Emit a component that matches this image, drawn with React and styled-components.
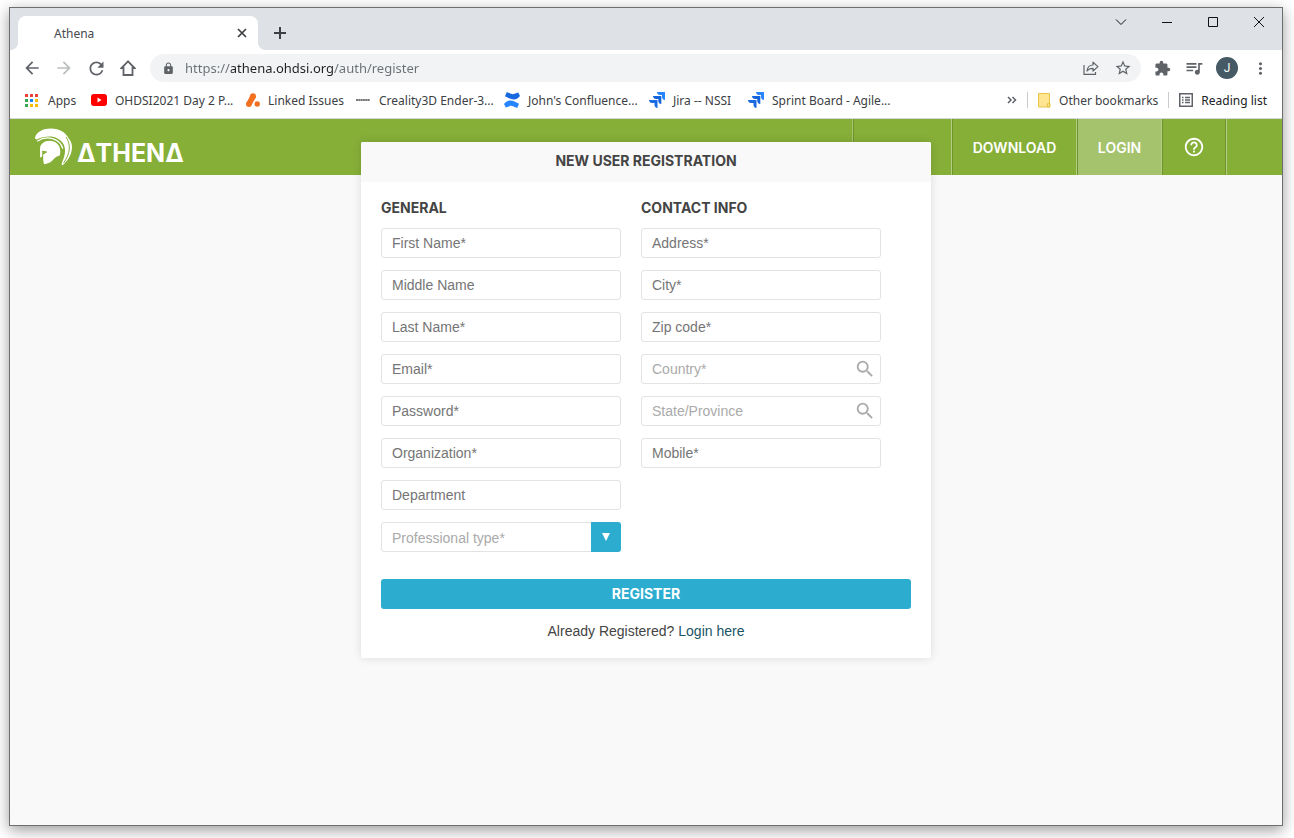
import React from "react";
import styled, { createGlobalStyle } from "styled-components";
import {
  MdArrowBack,
  MdArrowForward,
  MdRefresh,
  MdOutlineHome,
  MdLock,
  MdStarBorder,
  MdExtension,
  MdQueueMusic,
  MdMoreVert,
  MdSearch,
  MdHelpOutline,
} from "react-icons/md";

const chromeFont = `"Noto Sans", "Open Sans", sans-serif`;
const headingFont = `Inter, "Liberation Sans", sans-serif`;
const bodyFont = `"Liberation Sans", Arial, sans-serif`;

const GlobalStyle = createGlobalStyle`
  *, *::before, *::after { box-sizing: border-box; }
  body { margin: 0; background: #fff; font-family: ${bodyFont}; font-size: 14px; color: #444; }
  button, input, select { font: inherit; margin: 0; }
  a { text-decoration: none; color: inherit; }
  svg { display: block; flex: none; }
`;

const Desktop = styled.div`
  min-height: 100vh;
  padding: 7px 11px 12px 9px;
  display: flex;
  overflow: hidden;
`;

const Window = styled.div`
  flex: 1;
  min-width: 0;
  display: flex;
  flex-direction: column;
  border: 1px solid #6e6e6e;
  background: #f9f9f9;
  box-shadow: 0 4px 14px rgba(0, 0, 0, 0.4);
`;

/* Browser chrome */

const TabStrip = styled.div`
  height: 42px;
  padding: 8px 0 0 8px;
  display: flex;
  background: #dee1e6;
  font-family: ${chromeFont};
`;

const Tab = styled.div`
  position: relative;
  width: 240px;
  height: 34px;
  padding: 0 8px 0 36px;
  display: flex;
  align-items: center;
  justify-content: space-between;
  border-radius: 8px 8px 0 0;
  background: #fff;
  color: #45494d;
  font-size: 12px;

  &::before,
  &::after {
    content: "";
    position: absolute;
    bottom: 0;
    width: 8px;
    height: 8px;
  }
  &::before {
    left: -8px;
    background: radial-gradient(circle at 0 0, #dee1e6 8px, #fff 8px);
  }
  &::after {
    right: -8px;
    background: radial-gradient(circle at 100% 0, #dee1e6 8px, #fff 8px);
  }
`;

const IconButton = styled.button`
  width: ${(p) => p.$size || 20}px;
  height: ${(p) => p.$size || 20}px;
  padding: 0;
  display: flex;
  flex: none;
  align-items: center;
  justify-content: center;
  border: 0;
  background: none;
  color: ${(p) => p.$color || "#5f6368"};
`;

const NewTab = styled(IconButton)`
  margin: 7px 0 0 12px;
`;

const WindowControls = styled.div`
  margin-left: auto;
  padding-right: 17px;
  display: flex;
  gap: 34px;
`;

const Toolbar = styled.div`
  height: 36px;
  padding: 0 12px;
  display: flex;
  align-items: center;
  background: #fff;
  font-family: ${chromeFont};
`;

const NavButtons = styled.div`
  display: flex;
  gap: 12px;
  margin-right: 12px;
`;

const Omnibox = styled.div`
  flex: 1;
  min-width: 0;
  height: 28px;
  padding: 0 8px 0 12px;
  display: flex;
  align-items: center;
  gap: 12px;
  border-radius: 14px;
  background: #f1f3f4;

  & > svg {
    margin-right: -2px;
  }
`;

const Address = styled.input`
  flex: 1;
  min-width: 0;
  height: 24px;
  padding: 0;
  border: 0;
  outline: 0;
  font-size: 13px;
  color: #202124;
  background: linear-gradient(90deg, #6b6f74 46px, #202124 46px, #202124 148px, #6b6f74 148px);
  background-clip: text;
  -webkit-background-clip: text;
  -webkit-text-fill-color: transparent;
`;

const ToolbarActions = styled.div`
  display: flex;
  align-items: center;
  gap: 12px;
  margin-left: 11px;
`;

const Avatar = styled.button`
  width: 22px;
  height: 22px;
  padding: 0;
  border: 0;
  border-radius: 50%;
  background: #455a64;
  color: #fff;
  font-family: Roboto, sans-serif;
  font-size: 12px;
`;

const Bookmarks = styled.nav`
  height: 33px;
  padding: 0 15px;
  display: flex;
  align-items: center;
  border-bottom: 1px solid #d5d7da;
  background: #fff;
  font-family: ${chromeFont};
  font-size: 12px;
  color: #3c4043;
  white-space: nowrap;
  overflow: hidden;
`;

const Bookmark = styled.a`
  width: ${(p) => p.$width}px;
  flex: none;
  display: flex;
  align-items: center;
  gap: ${(p) => p.$gap || 8}px;
  padding-bottom: 4px;
`;

const BookmarkEnd = styled.div`
  margin-left: auto;
  padding-bottom: 4px;
  display: flex;
  align-items: center;
  gap: 10px;
`;

const EndLink = styled.a`
  display: flex;
  align-items: center;
  gap: 8px;
  color: ${(p) => p.$color || "inherit"};
`;

const Separator = styled.span`
  width: 1px;
  height: 16px;
  background: #c8cbcf;
`;

/* Athena site */

const Site = styled.div`
  position: relative;
  flex: 1;
`;

const SiteHeader = styled.header`
  height: 56px;
  padding: 0 55px 0 25px;
  display: flex;
  justify-content: space-between;
  background: #86af38;
`;

const Brand = styled.a`
  display: flex;
  align-items: center;
  gap: 4px;
  color: #fff;
`;

const Wordmark = styled.span`
  padding-top: 12px;
  font-family: Inter, "Open Sans", sans-serif;
  font-size: 25px;
  line-height: 32px;
  font-weight: 700;
`;

const SiteNav = styled.nav`
  display: flex;
  border-left: 1px solid #a6c470;
  border-right: 1px solid #b4cd85;
`;

const NavItem = styled.a`
  width: ${(p) => p.$width}px;
  display: flex;
  align-items: center;
  justify-content: center;
  border-left: 1px solid #6f942c;
  border-right: 1px solid #b4cd85;
  background: ${(p) => (p.$active ? "#a5c36c" : "transparent")};
  color: #fff;
  font-family: ${headingFont};
  font-size: 14px;
  font-weight: 600;

  &:last-child {
    border-right-color: #6f942c;
  }
`;

const Dialog = styled.form`
  position: absolute;
  top: 23px;
  left: 0;
  right: 0;
  width: 570px;
  max-width: 100%;
  margin: 0 auto;
  border-radius: 2px;
  background: #fff;
  box-shadow: 0 0 10px rgba(0, 0, 0, 0.12);
`;

const DialogTitle = styled.h1`
  margin: 0;
  padding: 9px 20px 11px;
  background: #f9f9f9;
  border-radius: 2px 2px 0 0;
  text-align: center;
  font-family: ${headingFont};
  font-size: 14px;
  line-height: 20px;
  font-weight: 700;
`;

const DialogBody = styled.div`
  padding: 16px 20px;
`;

const Columns = styled.div`
  display: grid;
  grid-template-columns: 240px 240px;
  column-gap: 20px;
  align-items: start;
`;

const FieldGroup = styled.fieldset`
  min-width: 0;
  margin: 0;
  padding: 0;
  border: 0;
  display: grid;
  row-gap: 12px;
`;

const GroupTitle = styled.legend`
  padding: 0 0 10px;
  font-family: ${headingFont};
  font-size: 14px;
  line-height: 20px;
  font-weight: 700;
`;

const Field = styled.div`
  position: relative;
`;

const TextInput = styled.input`
  display: block;
  width: 100%;
  height: 30px;
  padding: 0 10px;
  border: 1px solid #e3e3e3;
  border-radius: 3px;
  outline: 0;
  background: #fff;
  color: #444;

  &::placeholder {
    color: ${(p) => (p.$muted ? "#aaa" : "#757575")};
    opacity: 1;
  }
`;

const SearchMark = styled(MdSearch)`
  position: absolute;
  top: 4px;
  right: 5px;
  color: #aaa;
  pointer-events: none;
`;

const Select = styled.select`
  display: block;
  width: 100%;
  height: 30px;
  padding: 1px 40px 0 10px;
  appearance: none;
  border: 1px solid #e3e3e3;
  border-radius: 3px;
  outline: 0;
  background: #fff;
  color: #aaa;
`;

const SelectArrow = styled.span`
  position: absolute;
  top: 0;
  right: 0;
  width: 30px;
  height: 30px;
  display: flex;
  align-items: center;
  justify-content: center;
  border-radius: 0 3px 3px 0;
  background: #2cadd0;
  pointer-events: none;
`;

const Register = styled.button`
  display: block;
  width: 100%;
  height: 30px;
  margin-top: 27px;
  padding: 0 0 2px;
  border: 0;
  border-radius: 3px;
  background: #2cadd0;
  color: #fff;
  font-family: ${headingFont};
  font-weight: 700;
`;

const LoginLine = styled.p`
  margin: 12px 0 0;
  text-align: center;
  line-height: 21px;
`;

const LoginLink = styled.a`
  color: #1a5565;
`;

/* Drawings */

const HelmetIcon = () => (
  <svg width="38" height="38" viewBox="0 0 38 38" fill="#fff" aria-hidden="true">
    <path d="M0 9.500C1.500 4 8 .6 16 .6c8.500 0 14.600 4 17.500 9.600C35.600 12.500 37 15.500 37 19c0 7-4 14-9.500 18.300-.8-.4-1-1.500-.6-2.600C30.500 27 31 21 28.500 16 25.500 11 20 8.500 14.500 8.500 9.500 8.500 5 9.500 1.800 11.500.6 11.200 0 10.500 0 9.500z" />
    <path d="M2.200 13.200C7 10 12.500 9.300 17.500 10.600c5.500 1.600 9 5.400 10.300 10" fill="none" stroke="#fff" strokeWidth="1.300" />
    <path d="M31 9c5 7 4.500 17-2.500 26" fill="none" stroke="#86af38" strokeWidth="1" />
    <path d="M5 20.500C5.300 16 9.300 12.800 14.500 12.800c6 0 10.500 4 10.700 9.700 0 2 0 3.500-.4 5-2 .7-4.500 1.500-6 3.500-1.800 2.500-5.300 4.800-9.800 5.300-.8-3.500-1-7-.7-9.800L12 24.300l-.4-1-4.600-.5c.4 2.200.4 4.200 0 6L5 29.500c.3-3 0-6 0-9z" />
  </svg>
);

const JiraIcon = () => (
  <svg width="16" height="16" viewBox="0 0 16 16" aria-hidden="true">
    <path d="M0 8h8.500v8c-2 0-3-1.500-3-3v-2H3C1 11 0 9.500 0 8z" fill="#1a6ae4" />
    <path d="M4 4h8.300v8c-2 0-3-1.500-3-3V7H7C5 7 4 5.500 4 4z" fill="#1463dc" />
    <path d="M8 0h8v8c-2 0-3-1.500-3-3V3h-2C9 3 8 1.500 8 0z" fill="#2684ff" />
  </svg>
);

const ConfluenceIcon = () => (
  <svg width="16" height="16" viewBox="0 0 16 16" aria-hidden="true">
    <path d="M0 12l1.800 3.600 3.700-1.400c1.500-.7 2.500-.4 4 .2l3.700 1.500 1.800-4.200-4-2C7 7.800 3 8 0 12z" fill="#2684ff" />
    <path d="M16 4 14.200.4l-3.700 1.400c-1.500.7-2.500.4-4-.2L2.800.1 1 4.300l4 2C9 8.200 13 8 16 4z" fill="#1868e0" />
  </svg>
);

const appColors = ["#ea4335", "#ea4335", "#ea4335", "#34a853", "#1a84f0", "#fbbc04", "#34a853", "#fbbc04", "#fbbc04"];

const AppsIcon = () => (
  <svg width="13" height="13" viewBox="0 0 13 13" aria-hidden="true">
    {appColors.map((c, i) => (
      <rect key={i} x={(i % 3) * 5} y={Math.floor(i / 3) * 5} width="3" height="3" fill={c} />
    ))}
  </svg>
);

const YoutubeIcon = () => (
  <svg width="16" height="12" viewBox="0 0 16 12" aria-hidden="true">
    <rect width="16" height="12" rx="3" fill="#f00" />
    <path d="M6.500 3.500v5L10.500 6z" fill="#fff" />
  </svg>
);

const IssuesIcon = () => (
  <svg width="14" height="14" viewBox="0 0 14 14" fill="#f37021" aria-hidden="true">
    <circle cx="7" cy="3.200" r="3" />
    <path d="M4.200 2.500.8 9.500 5.400 12.200 10 4z" />
    <circle cx="2.900" cy="11" r="2.900" />
    <circle cx="11.200" cy="11" r="2.700" />
  </svg>
);

const CrealityIcon = () => (
  <svg width="16" height="4" viewBox="0 0 16 4" aria-hidden="true">
    <path d="M1 2h14" stroke="#777" strokeWidth="2" strokeDasharray="2 .3" />
  </svg>
);

const stroke = { fill: "none", stroke: "currentColor", "aria-hidden": true };

const ShareIcon = () => (
  <svg width="16" height="16" viewBox="0 0 16 16" {...stroke} strokeWidth="1.200">
    <path d="M1 5v9.400h11.500V12" />
    <path d="M4 11c.5-4 2.500-6 6-6V2.200L15 6.600 10 11V8.300C7.500 8.300 5.500 9 4 11z" strokeLinejoin="round" />
  </svg>
);

const ReadingIcon = () => (
  <svg width="14" height="14" viewBox="0 0 14 14" {...stroke} stroke="#5f6368" strokeWidth="1.500">
    <rect x=".75" y=".75" width="12.500" height="12.500" />
    <path d="M3 4.500h1.500M6 4.500h5M3 7h1.500M6 7h5M3 9.500h1.500M6 9.500h5" strokeWidth="1.300" />
  </svg>
);

const generalFields = [
  ["First Name*", "text"],
  ["Middle Name", "text"],
  ["Last Name*", "text"],
  ["Email*", "email"],
  ["Password*", "password"],
  ["Organization*", "text"],
  ["Department", "text"],
];

const contactFields = [
  ["Address*"],
  ["City*"],
  ["Zip code*"],
  ["Country*", true],
  ["State/Province", true],
  ["Mobile*"],
];

export default function App() {
  return (
    <>
      <GlobalStyle />
      <Desktop>
        <Window>
          <TabStrip>
            <Tab>
              Athena
              <IconButton $size={16} $color="#3c4043" aria-label="Close tab">
                <svg width="10" height="10" viewBox="0 0 10 10" {...stroke} strokeWidth="1.700">
                  <path d="M1 1l8 8M9 1 1 9" />
                </svg>
              </IconButton>
            </Tab>
            <NewTab $color="#3c4043" aria-label="New tab">
              <svg width="12" height="12" viewBox="0 0 12 12" {...stroke} strokeWidth="2">
                <path d="M6 0v12M0 6h12" />
              </svg>
            </NewTab>
            <WindowControls>
              <IconButton $size={12} $color="#111" aria-label="Search tabs">
                <svg width="12" height="12" viewBox="0 0 12 12" {...stroke}>
                  <path d="M1 3.500l5 5 5-5" />
                </svg>
              </IconButton>
              <IconButton $size={12} $color="#111" aria-label="Minimize">
                <svg width="12" height="12" viewBox="0 0 12 12" {...stroke}>
                  <path d="M1 6.500h10" />
                </svg>
              </IconButton>
              <IconButton $size={12} $color="#111" aria-label="Maximize">
                <svg width="12" height="12" viewBox="0 0 12 12" {...stroke}>
                  <path d="M1.500 1.500h9v9h-9z" />
                </svg>
              </IconButton>
              <IconButton $size={12} $color="#111" aria-label="Close">
                <svg width="12" height="12" viewBox="0 0 12 12" {...stroke}>
                  <path d="M1 1l10 10M11 1 1 11" />
                </svg>
              </IconButton>
            </WindowControls>
          </TabStrip>

          <Toolbar>
            <NavButtons>
              <IconButton aria-label="Back"><MdArrowBack size={20} /></IconButton>
              <IconButton $color="#bbbdbf" aria-label="Forward"><MdArrowForward size={20} /></IconButton>
              <IconButton aria-label="Reload"><MdRefresh size={21} /></IconButton>
              <IconButton aria-label="Home">
                <svg width="16" height="16" viewBox="0 0 16 16" {...stroke} strokeWidth="1.800">
                  <path d="M8 1.300 1.500 8H3.500v7h9V8h2z" />
                </svg>
              </IconButton>
            </NavButtons>
            <Omnibox>
              <MdLock size={13} color="#5f6368" />
              <Address aria-label="Address" defaultValue="https://athena.ohdsi.org/auth/register" />
              <IconButton aria-label="Share"><ShareIcon /></IconButton>
              <IconButton aria-label="Bookmark this page"><MdStarBorder size={18} /></IconButton>
            </Omnibox>
            <ToolbarActions>
              <IconButton aria-label="Extensions"><MdExtension size={17} /></IconButton>
              <IconButton aria-label="Media"><MdQueueMusic size={20} /></IconButton>
              <Avatar aria-label="Profile">J</Avatar>
              <IconButton aria-label="Menu"><MdMoreVert size={19} /></IconButton>
            </ToolbarActions>
          </Toolbar>

          <Bookmarks>
            <Bookmark href="#" $width={66} $gap={10}><AppsIcon />Apps</Bookmark>
            <Bookmark href="#" $width={155}><YoutubeIcon />OHDSI2021 Day 2 P...</Bookmark>
            <Bookmark href="#" $width={109}><IssuesIcon />Linked Issues</Bookmark>
            <Bookmark href="#" $width={149}><CrealityIcon />Creality3D Ender-3...</Bookmark>
            <Bookmark href="#" $width={145}><ConfluenceIcon />John's Confluence...</Bookmark>
            <Bookmark href="#" $width={99}><JiraIcon />Jira -- NSSI</Bookmark>
            <Bookmark href="#" $width={140}><JiraIcon />Sprint Board - Agile...</Bookmark>
            <BookmarkEnd>
              <IconButton $size={10} aria-label="More bookmarks">
                <svg width="10" height="8" viewBox="0 0 10 8" {...stroke} strokeWidth="1.500">
                  <path d="M1 1l3 3-3 3M5.500 1l3 3-3 3" />
                </svg>
              </IconButton>
              <Separator />
              <EndLink href="#">
                <svg width="13" height="15" viewBox="0 0 13 15" fill="#ffe492" stroke="#e8c547" aria-hidden="true">
                  <path d="M.5.5h11v13.500H.5zM9.500 10.500h2.500V14H9.500z" />
                </svg>
                Other bookmarks
              </EndLink>
              <Separator />
              <EndLink href="#" $color="#202124"><ReadingIcon />Reading list</EndLink>
            </BookmarkEnd>
          </Bookmarks>

          <Site>
            <SiteHeader>
              <Brand href="#" aria-label="Athena">
                <HelmetIcon />
                <Wordmark>ΔTHENΔ</Wordmark>
              </Brand>
              <SiteNav>
                <NavItem as="span" $width={99} />
                <NavItem href="#" $width={125}>DOWNLOAD</NavItem>
                <NavItem href="#" $width={85} $active>LOGIN</NavItem>
                <NavItem href="#" $width={64} aria-label="Help"><MdHelpOutline size={22} /></NavItem>
              </SiteNav>
            </SiteHeader>

            <Dialog onSubmit={(e) => e.preventDefault()}>
              <DialogTitle>NEW USER REGISTRATION</DialogTitle>
              <DialogBody>
                <Columns>
                  <FieldGroup>
                    <GroupTitle>GENERAL</GroupTitle>
                    {generalFields.map(([label, type]) => (
                      <TextInput key={label} type={type} placeholder={label} aria-label={label} />
                    ))}
                    <Field>
                      <Select aria-label="Professional type" defaultValue="">
                        <option value="">Professional type*</option>
                      </Select>
                      <SelectArrow>
                        <svg width="8" height="8" viewBox="0 0 8 8" fill="#fff" aria-hidden="true">
                          <path d="M0 0h8L4 8z" />
                        </svg>
                      </SelectArrow>
                    </Field>
                  </FieldGroup>
                  <FieldGroup>
                    <GroupTitle>CONTACT INFO</GroupTitle>
                    {contactFields.map(([label, lookup]) => (
                      <Field key={label}>
                        <TextInput type="text" placeholder={label} aria-label={label} $muted={lookup} />
                        {lookup && <SearchMark size={22} />}
                      </Field>
                    ))}
                  </FieldGroup>
                </Columns>
                <Register type="submit">REGISTER</Register>
                <LoginLine>
                  Already Registered? <LoginLink href="#">Login here</LoginLink>
                </LoginLine>
              </DialogBody>
            </Dialog>
          </Site>
        </Window>
      </Desktop>
    </>
  );
}
